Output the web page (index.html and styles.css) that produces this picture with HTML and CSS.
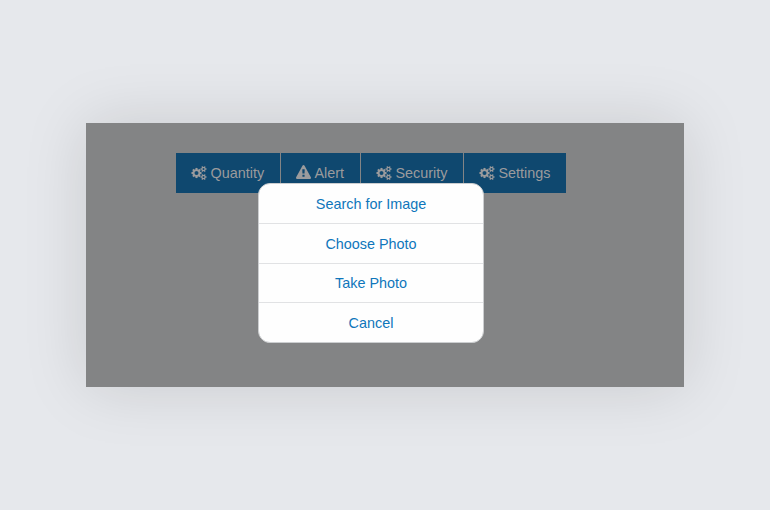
FILE: index.html
```
<!DOCTYPE html>
<html lang="en">
<head>
<meta charset="utf-8">
<title>Action sheet</title>
<link rel="stylesheet" href="styles.css">
</head>
<body>
<svg class="defs" aria-hidden="true">
  <symbol id="cogs" viewBox="0 0 1920 1792"><path d="M896 896q0-106-75-181t-181-75-181 75-75 181 75 181 181 75 181-75 75-181zm768 512q0-52-38-90t-90-38-90 38-38 90q0 53 37.5 90.5t90.5 37.5 90.5-37.5 37.5-90.5zm0-1024q0-52-38-90t-90-38-90 38-38 90q0 53 37.5 90.5t90.5 37.5 90.5-37.5 37.5-90.5zm-384 421v185q0 10-7 19.5t-16 10.5l-155 24q-11 35-32 76 34 48 90 115 7 11 7 20 0 12-7 19-23 30-82.5 89.5t-78.5 59.5q-11 0-21-7l-115-90q-37 19-77 31-11 108-23 155-7 24-30 24h-186q-11 0-20-7.5t-10-17.5l-23-153q-34-10-75-31l-118 89q-7 7-20 7-11 0-21-8-144-133-144-160 0-9 7-19 10-14 41-53t47-61q-23-44-35-82l-152-24q-10-1-17-9.5t-7-19.5v-185q0-10 7-19.5t16-10.5l155-24q11-35 32-76-34-48-90-115-7-11-7-20 0-12 7-20 22-30 82-89t79-59q11 0 21 7l115 90q34-18 77-32 11-108 23-154 7-24 30-24h186q11 0 20 7.5t10 17.5l23 153q34 10 75 31l118-89q8-7 20-7 11 0 21 8 144 133 144 160 0 8-7 19-12 16-42 54t-45 60q23 48 34 82l152 23q10 2 17 10.5t7 19.5zm640 533v140q0 16-149 31-12 27-30 52 51 113 51 138 0 4-4 7-122 71-124 71-8 0-46-47t-52-68q-20 2-30 2t-30-2q-14 21-52 68t-46 47q-2 0-124-71-4-3-4-7 0-25 51-138-18-25-30-52-149-15-149-31v-140q0-16 149-31 13-29 30-52-51-113-51-138 0-4 4-7 4-2 35-20t59-34 30-16q8 0 46 46.5t52 67.5q20-2 30-2t30 2q51-71 92-112l6-2q4 0 124 70 4 3 4 7 0 25-51 138 17 23 30 52 149 15 149 31zm0-1024v140q0 16-149 31-12 27-30 52 51 113 51 138 0 4-4 7-122 71-124 71-8 0-46-47t-52-68q-20 2-30 2t-30-2q-14 21-52 68t-46 47q-2 0-124-71-4-3-4-7 0-25 51-138-18-25-30-52-149-15-149-31v-140q0-16 149-31 13-29 30-52-51-113-51-138 0-4 4-7 4-2 35-20t59-34 30-16q8 0 46 46.5t52 67.5q20-2 30-2t30 2q51-71 92-112l6-2q4 0 124 70 4 3 4 7 0 25-51 138 17 23 30 52 149 15 149 31z"/></symbol>
  <symbol id="warning" viewBox="0 0 1792 1792"><path d="M1024 1375v-190q0-14-9.500-23.500t-22.500-9.500h-192q-13 0-22.500 9.500t-9.500 23.500v190q0 14 9.500 23.500t22.500 9.500h192q13 0 22.500-9.500t9.500-23.500zm-2-374l18-459q0-12-10-19-13-11-24-11h-220q-11 0-24 11-10 7-10 21l17 457q0 10 10 16.500t24 6.500h185q14 0 23.500-6.500t10.500-16.500zm-14-934l768 1408q35 63-2 126-17 29-46.500 46t-63.500 17h-1536q-34 0-63.500-17t-46.500-46q-37-63-2-126l768-1408q17-31 47-49t65-18 65 18 47 49z"/></symbol>
</svg>
<main class="panel">
  <nav class="toolbar">
    <a class="tool tool-quantity"><svg class="icon icon-cogs"><use href="#cogs"/></svg>Quantity</a>
    <a class="tool tool-alert"><svg class="icon icon-warning"><use href="#warning"/></svg>Alert</a>
    <a class="tool tool-security"><svg class="icon icon-cogs"><use href="#cogs"/></svg>Security</a>
    <a class="tool tool-settings"><svg class="icon icon-cogs"><use href="#cogs"/></svg>Settings</a>
  </nav>
  <div class="sheet">
    <a class="option">Search for Image</a>
    <a class="option">Choose Photo</a>
    <a class="option">Take Photo</a>
    <a class="option">Cancel</a>
  </div>
</main>
</body>
</html>
```
FILE: styles.css
```
* { box-sizing: border-box; }

body {
  margin: 0;
  height: 510px;
  display: flex;
  justify-content: center;
  align-items: center;
  background: #e6e8ec;
  font: 14.4px "Liberation Sans", Helvetica, Arial, sans-serif;
}

.defs {
  position: absolute;
  width: 0;
  height: 0;
}

.panel {
  position: relative;
  width: 598px;
  height: 264px;
  padding: 30px 90px;
  background: #838485;
  box-shadow: 0 0 60px rgba(0, 0, 0, 0.13);
}

.toolbar {
  display: flex;
  gap: 1px;
}

.tool {
  display: flex;
  align-items: center;
  gap: 3.5px;
  height: 40px;
  padding-left: 15px;
  background: #0f486f;
  color: #9b9b9d;
}

.tool-quantity { width: 104px; }
.tool-alert { width: 79px; }
.tool-security { width: 102px; }
.tool-settings { width: 102px; }

.icon {
  width: 16px;
  height: 14px;
  fill: currentColor;
}

.icon-cogs {
  stroke: currentColor;
  stroke-width: 20px;
}

.icon-warning {
  width: 15px;
  height: 15px;
  margin-bottom: 2px;
}

.sheet {
  position: absolute;
  top: 60px;
  left: 172px;
  width: 226px;
  height: 160px;
  display: grid;
  grid-template-rows: 40px 40px 39px 39px;
  border: 1px solid #ccced0;
  border-radius: 12px;
  background: #fefefe;
}

.option {
  display: flex;
  align-items: center;
  justify-content: center;
  border-bottom: 1px solid #e1e2e4;
  color: #0f76bb;
}

.option:last-child { border-bottom: 0; }
```
